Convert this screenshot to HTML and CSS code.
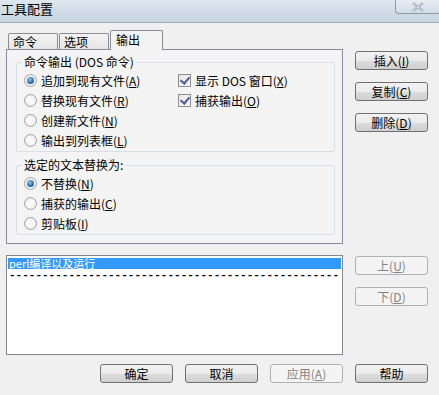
FILE: index.html
```html
<!DOCTYPE html>
<html lang="zh-CN">
<head>
    <meta charset="UTF-8">
    <title>工具配置</title>
    <link rel="stylesheet" href="styles.css">
</head>
<body>
    <div class="titlebar">
        <span class="title">工具配置</span>
        <span class="close-btn">
            <svg width="14" height="10" viewBox="0 0 14 10"><path d="M2 1 L12 9 M12 1 L2 9" stroke="#8a96a4" stroke-width="2.2" fill="none"/><path d="M2 1 L12 9 M12 1 L2 9" stroke="#f4f7fa" stroke-width="0.8" fill="none"/></svg>
        </span>
    </div>

    <div class="main">
        <div class="left">
            <div class="tabs">
                <div class="tab">命令</div>
                <div class="tab">选项</div>
                <div class="tab active">输出</div>
            </div>
            <div class="panel">
                <div class="group group-out">
                    <div class="legend">命令输出 (DOS 命令)</div>
                    <div class="cols">
                        <div class="col">
                            <div class="opt"><span class="radio on"></span><span>追加到现有文件(<u>A</u>)</span></div>
                            <div class="opt"><span class="radio"></span><span>替换现有文件(<u>R</u>)</span></div>
                            <div class="opt"><span class="radio"></span><span>创建新文件(<u>N</u>)</span></div>
                            <div class="opt"><span class="radio"></span><span>输出到列表框(<u>L</u>)</span></div>
                        </div>
                        <div class="col col-check">
                            <div class="opt"><span class="check"></span><span>显示 DOS 窗口(<u>X</u>)</span></div>
                            <div class="opt"><span class="check"></span><span>捕获输出(<u>O</u>)</span></div>
                        </div>
                    </div>
                </div>
                <div class="group group-sel">
                    <div class="legend">选定的文本替换为:</div>
                    <div class="rows">
                        <div class="opt"><span class="radio on"></span><span>不替换(<u>N</u>)</span></div>
                        <div class="opt"><span class="radio"></span><span>捕获的输出(<u>C</u>)</span></div>
                        <div class="opt"><span class="radio"></span><span>剪贴板(<u>I</u>)</span></div>
                    </div>
                </div>
            </div>
            <div class="listbox">
                <div class="item selected">perl编译以及运行</div>
                <div class="item dashes">--------------------------------------------------</div>
            </div>
        </div>

        <div class="right">
            <div class="btn">插入(<u>I</u>)</div>
            <div class="btn">复制(<u>C</u>)</div>
            <div class="btn">删除(<u>D</u>)</div>
            <div class="btn disabled move-up">上(<u>U</u>)</div>
            <div class="btn disabled">下(<u>D</u>)</div>
        </div>
    </div>

    <div class="bottom">
        <div class="btn">确定</div>
        <div class="btn">取消</div>
        <div class="btn disabled">应用(<u>A</u>)</div>
        <div class="btn">帮助</div>
    </div>
</body>
</html>
```

FILE: styles.css
```css
body {
    margin: 0;
    width: 439px;
    height: 395px;
    background: #f0f0f0;
    font-family: 'Noto Sans CJK SC', 'DejaVu Sans', sans-serif;
    font-size: 12px;
    color: #000;
    overflow: hidden;
}
u {
    text-decoration: underline;
}
.titlebar {
    height: 22px;
    border-bottom: 1px solid #a6adb5;
    background: linear-gradient(to bottom, #dfe7ef, #cfdae6 60%, #c6d3e0);
    display: flex;
    justify-content: space-between;
    align-items: flex-start;
}
.title {
    font-size: 13px;
    line-height: 18px;
    padding-left: 1px;
}
.close-btn {
    width: 44px;
    height: 13px;
    margin-right: -2px;
    border: 1px solid #8f9aa8;
    border-top: none;
    border-radius: 0 0 4px 4px;
    background: linear-gradient(to bottom, #e9eef3, #d3dce6);
    display: flex;
    justify-content: center;
    align-items: center;
}
.main {
    display: flex;
    padding: 7px 0 0 6px;
}
.left {
    width: 337px;
}
.tabs {
    display: flex;
    align-items: flex-end;
    padding-left: 2px;
    height: 19px;
}
.tab {
    width: 44px;
    height: 15px;
    margin-right: 1px;
    border: 1px solid #898c95;
    border-bottom: none;
    border-radius: 2px 2px 0 0;
    background: linear-gradient(to bottom, #f3f3f3, #e6e6e6);
    line-height: 16px;
    padding-left: 4px;
}
.tab.active {
    width: 46px;
    height: 19px;
    margin-bottom: -1px;
    background: #f4f4f4;
    position: relative;
    line-height: 17px;
    padding-left: 5px;
}
.panel {
    box-sizing: border-box;
    height: 195px;
    border: 1px solid #898c95;
    background: #f4f4f4;
    padding: 12px 7px 0 9px;
}
.group {
    border: 1px solid #d5dfe5;
    border-radius: 2px;
    padding: 0 0 0 7px;
    box-sizing: border-box;
}
.legend {
    display: block;
    width: fit-content;
    margin: -8px 0 0 -2px;
    padding: 0 2px;
    line-height: 14px;
    height: 14px;
    background: #f4f4f4;
}
.group-out {
    height: 90px;
}
.group-sel {
    margin-top: 13px;
    height: 70px;
}
.cols {
    display: flex;
    margin-top: 1px;
}
.rows {
    margin-top: 1px;
}
.col {
    width: 154px;
}
.opt {
    height: 20px;
    display: flex;
    align-items: center;
    white-space: nowrap;
}
.radio {
    width: 11px;
    height: 11px;
    border: 1px solid #a1a6ab;
    border-radius: 50%;
    background: radial-gradient(circle, #f8f8f8 40%, #dcdcdc);
    margin-right: 4px;
    position: relative;
    flex: none;
}
.radio.on::after {
    content: '';
    position: absolute;
    left: 2px;
    top: 2px;
    width: 7px;
    height: 7px;
    border-radius: 50%;
    background: radial-gradient(circle at 40% 35%, #8fc6ea, #1c5f9c 70%, #1a4c78);
}
.check {
    width: 11px;
    height: 11px;
    border: 1px solid #8f8f8f;
    background: linear-gradient(to bottom right, #e5e5e5, #fafafa);
    margin-right: 4px;
    position: relative;
    flex: none;
}
.check::after {
    content: '';
    position: absolute;
    left: 3px;
    top: 0;
    width: 4px;
    height: 7px;
    border: solid #4a5f97;
    border-width: 0 2px 2px 0;
    transform: rotate(40deg);
}
.listbox {
    box-sizing: border-box;
    margin-top: 11px;
    height: 100px;
    border: 1px solid #828790;
    background: #fff;
    padding: 2px 1px 0 1px;
}
.item {
    height: 11px;
    line-height: 11px;
    font-size: 11px;
    white-space: nowrap;
    padding-left: 1px;
}
.item.selected {
    background: #3399ff;
    color: #fff;
}
.item.dashes {
    font-family: 'Liberation Mono', monospace;
    font-size: 11px;
    font-weight: bold;
    margin-top: 1px;
}
.right {
    display: flex;
    flex-direction: column;
    gap: 12px;
    margin-left: 12px;
    padding-top: 21px;
}
.btn {
    width: 71px;
    height: 17px;
    border: 1px solid #707070;
    border-radius: 3px;
    background: linear-gradient(to bottom, #f2f2f2 0%, #ebebeb 50%, #dddddd 51%, #cfcfcf 100%);
    text-align: center;
    line-height: 17px;
}
.btn.disabled {
    border-color: #adb2b5;
    background: #f4f4f4;
    color: #838383;
}
.move-up {
    margin-top: 112px;
}
.bottom {
    display: flex;
    gap: 12px;
    padding: 9px 0 0 100px;
}
```
